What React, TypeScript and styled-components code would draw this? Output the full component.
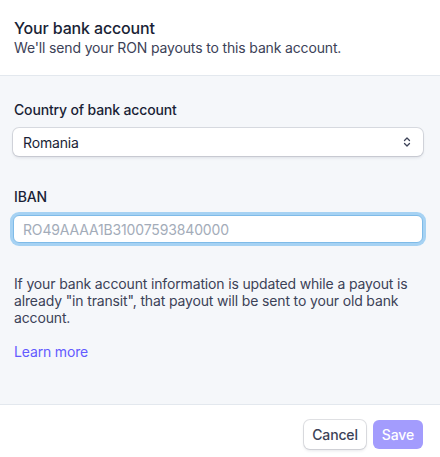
import styled, { createGlobalStyle } from "styled-components"

const GlobalStyle = createGlobalStyle`
	html, body {
		margin: 0;
		padding: 0;
		background: #fff;
	}
	body {
		font-family: Inter, "Noto Sans", "Liberation Sans", sans-serif;
		letter-spacing: -0.15px;
		-webkit-font-smoothing: antialiased;
	}
`

const Panel = styled.div`
	width: 440px;
	height: 457px;
	display: flex;
	flex-direction: column;
	background: #fff;
	overflow: hidden;
`

const Header = styled.header`
	padding: 18px 17px 17px 14px;
	border-bottom: 1px solid #e3e8ee;

	h1 {
		margin: 0;
		font-size: 16px;
		line-height: 20px;
		font-weight: 450;
		color: #1a1f36;
	}
	p {
		margin: 0;
		font-size: 14px;
		line-height: 20px;
		color: #3c4257;
	}
`

const Body = styled.section`
	background: #f5f7fa;
	padding: 24px 17px 42px 13px;
	border-bottom: 1px solid #e3e8ee;
	display: flex;
	flex-direction: column;
`

const Field = styled.div<{ $gap?: number }>`
	display: flex;
	flex-direction: column;
	gap: 8px;
	margin-bottom: ${(p) => p.$gap ?? 0}px;
`

const Label = styled.label`
	font-size: 14px;
	line-height: 20px;
	font-weight: 450;
	color: #1a1f36;
	padding-left: 1px;
`

const SelectBox = styled.div`
	height: 28px;
	box-sizing: border-box;
	display: flex;
	align-items: center;
	justify-content: space-between;
	padding: 0 10px;
	background: #fff;
	border-radius: 6px;
	box-shadow: 0 0 0 1px rgba(60, 66, 87, 0.16), 0 2px 3px rgba(60, 66, 87, 0.12);
	font-size: 14px;
	color: #1a1f36;

	svg {
		display: block;
		margin-right: 1px;
	}
`

const Input = styled.div`
	height: 28px;
	box-sizing: border-box;
	display: flex;
	align-items: center;
	padding: 0 9px;
	background: #fff;
	border-radius: 6px;
	border: 1px solid #7fbbe8;
	box-shadow: 0 0 0 3px #a6d2f3;
	font-size: 14px;
	color: #a3acb9;
`

const Note = styled.p`
	margin: 0 0 16px;
	font-size: 14px;
	line-height: 17px;
	color: #3c4257;
	padding-left: 1px;
`

const Link = styled.a`
	font-size: 14px;
	line-height: 20px;
	color: #635bff;
	text-decoration: none;
	padding-left: 1px;
	align-self: flex-start;
`

const Footer = styled.footer`
	display: flex;
	justify-content: flex-end;
	gap: 6px;
	padding: 15px 17px 0 13px;
`

const Button = styled.button<{ $primary?: boolean }>`
	height: 29px;
	box-sizing: border-box;
	padding: 0 ${(p) => (p.$primary ? 9 : 8)}px;
	border-radius: 6px;
	font-family: inherit;
	letter-spacing: inherit;
	font-size: 14px;
	font-weight: 450;
	border: none;
	cursor: pointer;
	color: ${(p) => (p.$primary ? "#fff" : "#3c4257")};
	background: ${(p) => (p.$primary ? "#a39cfd" : "#fff")};
	box-shadow: ${(p) =>
		p.$primary
			? "none"
			: "0 0 0 1px rgba(60, 66, 87, 0.16), 0 2px 3px rgba(60, 66, 87, 0.12)"};
	margin: 0 ${(p) => (p.$primary ? 0 : 1)}px;
`

const Chevrons = () => (
	<svg width="10" height="12" viewBox="0 0 10 12" fill="none">
		<path
			d="M2.5 4.5 L5 2 L7.5 4.5 M2.5 7.5 L5 10 L7.5 7.5"
			stroke="#3c4257"
			strokeWidth="1.3"
			strokeLinecap="round"
			strokeLinejoin="round"
		/>
	</svg>
)

const App = () => {
	return (
		<>
			<GlobalStyle />
			<Panel>
				<Header>
					<h1>Your bank account</h1>
					<p>We'll send your RON payouts to this bank account.</p>
				</Header>
				<Body>
					<Field $gap={31}>
						<Label>Country of bank account</Label>
						<SelectBox>
							<span>Romania</span>
							<Chevrons />
						</SelectBox>
					</Field>
					<Field $gap={32}>
						<Label>IBAN</Label>
						<Input>RO49AAAA1B31007593840000</Input>
					</Field>
					<Note>
						If your bank account information is updated while a payout is
						already "in transit", that payout will be sent to your old bank
						account.
					</Note>
					<Link href="#">Learn more</Link>
				</Body>
				<Footer>
					<Button>Cancel</Button>
					<Button $primary disabled>
						Save
					</Button>
				</Footer>
			</Panel>
		</>
	)
}

export default App
